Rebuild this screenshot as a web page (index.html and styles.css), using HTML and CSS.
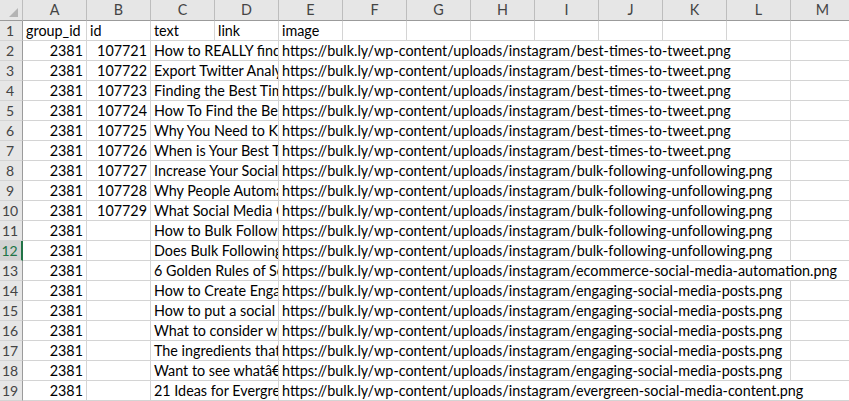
FILE: index.html
```html
<!DOCTYPE html>
<html>
<head>
<meta charset="utf-8">
<link rel="stylesheet" href="styles.css">
</head>
<body>
<div class="sheet">
  <div class="row hdr">
    <div class="rh corner"><svg width="22" height="20" viewBox="0 0 22 20"><polygon points="9,17 18,17 18,8" fill="#b4b4b4"/></svg></div>
    <div class="ch">A</div><div class="ch">B</div><div class="ch">C</div><div class="ch">D</div><div class="ch">E</div><div class="ch">F</div><div class="ch">G</div><div class="ch">H</div><div class="ch">I</div><div class="ch">J</div><div class="ch">K</div><div class="ch">L</div><div class="ch">M</div>
  </div>
  <div class="row">
    <div class="rh">1</div>
    <div class="c w1">group_id</div><div class="c w1">id</div><div class="c w1">text</div><div class="c w1">link</div><div class="c w1">image</div>
    <div class="c w1"></div><div class="c w1"></div><div class="c w1"></div><div class="c w1"></div><div class="c w1"></div><div class="c w1"></div><div class="c w1"></div><div class="c w1"></div>
  </div>
  <div class="row">
    <div class="rh">2</div>
    <div class="c w1 n">2381</div><div class="c w1 n">107721</div><div class="c w2">How to REALLY find the Best Times to Tweet</div>
    <div class="c w8">https://bulk.ly/wp-content/uploads/instagram/best-times-to-tweet.png</div><div class="c w1"></div>
  </div>
  <div class="row">
    <div class="rh">3</div>
    <div class="c w1 n">2381</div><div class="c w1 n">107722</div><div class="c w2">Export Twitter Analytics</div>
    <div class="c w8">https://bulk.ly/wp-content/uploads/instagram/best-times-to-tweet.png</div><div class="c w1"></div>
  </div>
  <div class="row">
    <div class="rh">4</div>
    <div class="c w1 n">2381</div><div class="c w1 n">107723</div><div class="c w2">Finding the Best Times</div>
    <div class="c w8">https://bulk.ly/wp-content/uploads/instagram/best-times-to-tweet.png</div><div class="c w1"></div>
  </div>
  <div class="row">
    <div class="rh">5</div>
    <div class="c w1 n">2381</div><div class="c w1 n">107724</div><div class="c w2">How To Find the Best Times</div>
    <div class="c w8">https://bulk.ly/wp-content/uploads/instagram/best-times-to-tweet.png</div><div class="c w1"></div>
  </div>
  <div class="row">
    <div class="rh">6</div>
    <div class="c w1 n">2381</div><div class="c w1 n">107725</div><div class="c w2">Why You Need to Know</div>
    <div class="c w8">https://bulk.ly/wp-content/uploads/instagram/best-times-to-tweet.png</div><div class="c w1"></div>
  </div>
  <div class="row">
    <div class="rh">7</div>
    <div class="c w1 n">2381</div><div class="c w1 n">107726</div><div class="c w2">When is Your Best Time</div>
    <div class="c w8">https://bulk.ly/wp-content/uploads/instagram/best-times-to-tweet.png</div><div class="c w1"></div>
  </div>
  <div class="row">
    <div class="rh">8</div>
    <div class="c w1 n">2381</div><div class="c w1 n">107727</div><div class="c w2">Increase Your Social Reach</div>
    <div class="c w8">https://bulk.ly/wp-content/uploads/instagram/bulk-following-unfollowing.png</div><div class="c w1"></div>
  </div>
  <div class="row">
    <div class="rh">9</div>
    <div class="c w1 n">2381</div><div class="c w1 n">107728</div><div class="c w2">Why People Automate</div>
    <div class="c w8">https://bulk.ly/wp-content/uploads/instagram/bulk-following-unfollowing.png</div><div class="c w1"></div>
  </div>
  <div class="row">
    <div class="rh">10</div>
    <div class="c w1 n">2381</div><div class="c w1 n">107729</div><div class="c w2">What Social Media Channels</div>
    <div class="c w8">https://bulk.ly/wp-content/uploads/instagram/bulk-following-unfollowing.png</div><div class="c w1"></div>
  </div>
  <div class="row">
    <div class="rh">11</div>
    <div class="c w1 n">2381</div><div class="c w1"></div><div class="c w2">How to Bulk Follow and Unfollow</div>
    <div class="c w8">https://bulk.ly/wp-content/uploads/instagram/bulk-following-unfollowing.png</div><div class="c w1"></div>
  </div>
  <div class="row">
    <div class="rh sel">12</div>
    <div class="c w1 n">2381</div><div class="c w1"></div><div class="c w2">Does Bulk Following Work</div>
    <div class="c w8">https://bulk.ly/wp-content/uploads/instagram/bulk-following-unfollowing.png</div><div class="c w1"></div>
  </div>
  <div class="row">
    <div class="rh">13</div>
    <div class="c w1 n">2381</div><div class="c w1"></div><div class="c w2">6 Golden Rules of Social</div>
    <div class="c w9">https://bulk.ly/wp-content/uploads/instagram/ecommerce-social-media-automation.png</div>
  </div>
  <div class="row">
    <div class="rh">14</div>
    <div class="c w1 n">2381</div><div class="c w1"></div><div class="c w2">How to Create Engaging Posts</div>
    <div class="c w8">https://bulk.ly/wp-content/uploads/instagram/engaging-social-media-posts.png</div><div class="c w1"></div>
  </div>
  <div class="row">
    <div class="rh">15</div>
    <div class="c w1 n">2381</div><div class="c w1"></div><div class="c w2">How to put a social media</div>
    <div class="c w8">https://bulk.ly/wp-content/uploads/instagram/engaging-social-media-posts.png</div><div class="c w1"></div>
  </div>
  <div class="row">
    <div class="rh">16</div>
    <div class="c w1 n">2381</div><div class="c w1"></div><div class="c w2">What to consider when</div>
    <div class="c w8">https://bulk.ly/wp-content/uploads/instagram/engaging-social-media-posts.png</div><div class="c w1"></div>
  </div>
  <div class="row">
    <div class="rh">17</div>
    <div class="c w1 n">2381</div><div class="c w1"></div><div class="c w2">The ingredients that make</div>
    <div class="c w8">https://bulk.ly/wp-content/uploads/instagram/engaging-social-media-posts.png</div><div class="c w1"></div>
  </div>
  <div class="row">
    <div class="rh">18</div>
    <div class="c w1 n">2381</div><div class="c w1"></div><div class="c w2">Want to see whatâ€™s</div>
    <div class="c w8">https://bulk.ly/wp-content/uploads/instagram/engaging-social-media-posts.png</div><div class="c w1"></div>
  </div>
  <div class="row">
    <div class="rh">19</div>
    <div class="c w1 n">2381</div><div class="c w1"></div><div class="c w2">21 Ideas for Evergreen Content</div>
    <div class="c w9">https://bulk.ly/wp-content/uploads/instagram/evergreen-social-media-content.png</div>
  </div>
</div>
</body>
</html>
```
FILE: styles.css
```css
html, body {
  margin: 0;
  padding: 0;
  background: #ffffff;
  overflow: hidden;
}
body {
  width: 849px;
  height: 401px;
  font-family: "Lato", "Open Sans", sans-serif;
  font-size: 14.35px;
  color: #000;
}
.sheet {
  width: 900px;
}
.row {
  display: flex;
  height: 20px;
}
.row.hdr {
  height: 21px;
}
.rh {
  flex: none;
  width: 23px;
  box-sizing: border-box;
  background: #e6e6e6;
  border-right: 1px solid #9b9b9b;
  border-bottom: 1px solid #d4d4d4;
  color: #444;
  text-align: center;
  line-height: 19px;
  font-size: 14px;
  padding-right: 2px;
}
.rh.sel {
  background: #d2d2d2;
  border-right: 2px solid #217346;
  color: #217346;
}
.rh.corner {
  padding: 0;
  border-bottom: 1px solid #9b9b9b;
  border-right: 1px solid #bdbdbd;
}
.rh.corner svg {
  display: block;
}
.ch {
  flex: none;
  width: 64px;
  box-sizing: border-box;
  background: #e6e6e6;
  border-right: 1px solid #bdbdbd;
  border-bottom: 1px solid #9b9b9b;
  color: #444;
  text-align: center;
  line-height: 20px;
}
.c {
  flex: none;
  box-sizing: border-box;
  border-right: 1px solid #d4d4d4;
  border-bottom: 1px solid #d4d4d4;
  white-space: nowrap;
  overflow: hidden;
  line-height: 19px;
  padding: 0 3px;
}
.c.n {
  text-align: right;
}
.w1 { width: 64px; }
.w2 { width: 128px; }
.w8 { width: 512px; }
.w9 { width: 576px; }
```
